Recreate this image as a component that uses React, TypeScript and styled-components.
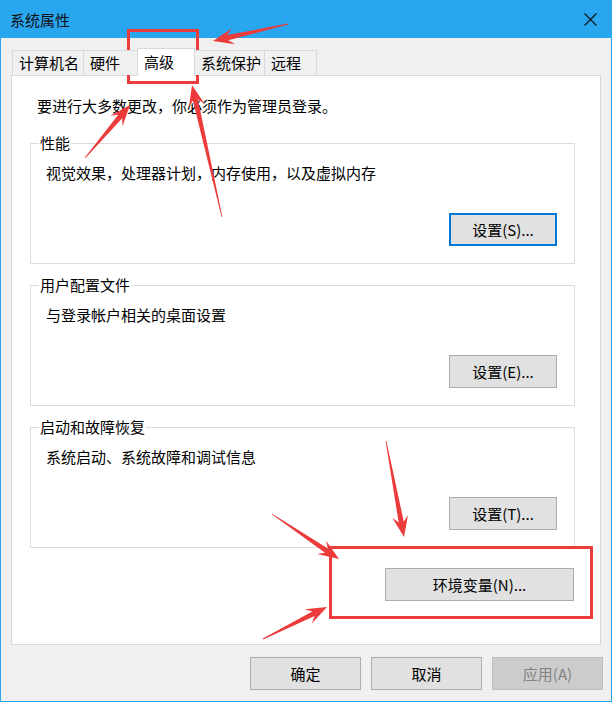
import React from 'react';
import styled, { createGlobalStyle } from 'styled-components';

const GlobalStyle = createGlobalStyle`
  html, body { margin: 0; padding: 0; background: #ffffff; }
  body {
    font-family: "Noto Sans CJK SC", "Noto Sans", sans-serif;
    font-size: 15px;
    color: #000;
  }
  * { box-sizing: border-box; }
`;

const Stage = styled.div`
  position: relative;
  width: 614px;
  height: 703px;
`;

const Window = styled.div`
  width: 612px;
  height: 702px;
  border: 1px solid #2ea4ea;
  background: #f0f0f0;
  display: flex;
  flex-direction: column;
`;

const TitleBar = styled.div`
  height: 37px;
  flex: none;
  background: #29a6f0;
  display: flex;
  align-items: center;
  justify-content: space-between;
  padding: 0 14px 0 9px;
`;

const Title = styled.span`
  font-size: 15px;
  line-height: 20px;
  color: #111;
`;

const CloseIcon = styled.svg`
  width: 13px;
  height: 13px;
  display: block;
`;

const Body = styled.div`
  flex: 1;
  display: flex;
  flex-direction: column;
  padding: 10px 8px 11px 10px;
`;

const TabStrip = styled.div`
  height: 27px;
  display: flex;
  align-items: flex-end;
  padding-left: 1px;
`;

const Tab = styled.div<{ $w: number; $active?: boolean }>`
  width: ${p => p.$w}px;
  height: ${p => (p.$active ? 28 : 25)}px;
  margin-bottom: ${p => (p.$active ? -1 : 0)}px;
  margin-left: -1px;
  &:first-child { margin-left: 0; }
  position: relative;
  z-index: ${p => (p.$active ? 2 : 1)};
  border: 1px solid #d9d9d9;
  border-bottom: none;
  background: ${p => (p.$active ? '#ffffff' : '#f0f0f0')};
  padding: ${p => (p.$active ? '0 0 2px 6px' : '0 0 0 6px')};
  display: flex;
  align-items: center;
  font-size: 15px;
  line-height: 20px;
  white-space: nowrap;
`;

const Panel = styled.div`
  width: 590px;
  height: 570px;
  flex: none;
  background: #ffffff;
  border: 1px solid #d9d9d9;
  padding: 20px 25px 0 18px;
  display: flex;
  flex-direction: column;
`;

const Intro = styled.div`
  margin-left: 7px;
  line-height: 20px;
  white-space: nowrap;
`;

const Groups = styled.div`
  margin-top: 17px;
  display: flex;
  flex-direction: column;
  gap: 11px;
`;

const Group = styled.fieldset`
  margin: 0;
  padding: 0;
  min-width: 0;
  border: 1px solid #dcdcdc;
`;

const Legend = styled.legend`
  margin-left: 8px;
  padding: 0 1px;
  font-size: 15px;
  line-height: 20px;
`;

const GroupBody = styled.div`
  padding: 10px 17px 17px 15px;
  display: flex;
  flex-direction: column;
`;

const Desc = styled.div`
  line-height: 20px;
  white-space: nowrap;
`;

const Button = styled.button<{ $w: number; $variant?: 'normal' | 'focus' | 'disabled' }>`
  width: ${p => p.$w}px;
  height: 33px;
  flex: none;
  font-family: inherit;
  font-size: 15px;
  line-height: 20px;
  padding: 0;
  margin: 0;
  display: flex;
  align-items: center;
  justify-content: center;
  cursor: default;
  background: ${p => (p.$variant === 'disabled' ? '#cccccc' : '#e1e1e1')};
  color: ${p => (p.$variant === 'disabled' ? '#838383' : '#000')};
  border: ${p =>
    p.$variant === 'focus'
      ? '2px solid #0078d7'
      : p.$variant === 'disabled'
      ? '1px solid #bfbfbf'
      : '1px solid #adadad'};
`;

const GroupButton = styled(Button)`
  margin-top: 30px;
  align-self: flex-end;
`;

const EnvRow = styled.div`
  margin-top: 20px;
  display: flex;
  justify-content: flex-end;
  padding-right: 1px;
`;

const Footer = styled.div`
  margin-top: 12px;
  display: flex;
  justify-content: flex-end;
  gap: 10px;
`;

const Overlay = styled.svg`
  position: absolute;
  left: 0;
  top: 0;
  width: 614px;
  height: 703px;
  pointer-events: none;
`;

const RED = '#ec3b3b';

function arrowPoints(tx: number, ty: number, px: number, py: number): string {
  const head = 21;
  const headHalf = 8;
  const neckHalf = 2.6;
  const dx = px - tx;
  const dy = py - ty;
  const len = Math.hypot(dx, dy);
  const ux = dx / len;
  const uy = dy / len;
  const nx = -uy;
  const ny = ux;
  const neckX = px - ux * head * 0.72;
  const neckY = py - uy * head * 0.72;
  const baseX = px - ux * head;
  const baseY = py - uy * head;
  const pts: [number, number][] = [
    [tx + nx * 0.4, ty + ny * 0.4],
    [neckX + nx * neckHalf, neckY + ny * neckHalf],
    [baseX + nx * headHalf, baseY + ny * headHalf],
    [px, py],
    [baseX - nx * headHalf, baseY - ny * headHalf],
    [neckX - nx * neckHalf, neckY - ny * neckHalf],
    [tx - nx * 0.4, ty - ny * 0.4],
  ];
  return pts.map(p => `${p[0].toFixed(1)},${p[1].toFixed(1)}`).join(' ');
}

const arrows: [number, number, number, number][] = [
  [288, 24, 213, 41],
  [85, 158, 130, 105],
  [222, 217, 192, 85],
  [386, 441, 404, 537],
  [272, 514, 339, 559],
  [263, 639, 327, 607],
];

const tabs = [
  { label: '计算机名', w: 72 },
  { label: '硬件', w: 55 },
  { label: '高级', w: 58, active: true },
  { label: '系统保护', w: 71 },
  { label: '远程', w: 53 },
];

const groups = [
  { title: '性能', desc: '视觉效果，处理器计划，内存使用，以及虚拟内存', btn: '设置(S)...', focus: true },
  { title: '用户配置文件', desc: '与登录帐户相关的桌面设置', btn: '设置(E)...' },
  { title: '启动和故障恢复', desc: '系统启动、系统故障和调试信息', btn: '设置(T)...' },
];

export default function App() {
  return (
    <Stage>
      <GlobalStyle />
      <Window>
        <TitleBar>
          <Title>系统属性</Title>
          <CloseIcon viewBox="0 0 13 13">
            <path d="M0.5 0.5 L12.5 12.5 M12.5 0.5 L0.5 12.5" stroke="#111" strokeWidth="1.1" fill="none" />
          </CloseIcon>
        </TitleBar>
        <Body>
          <TabStrip>
            {tabs.map(t => (
              <Tab key={t.label} $w={t.w} $active={t.active}>
                {t.label}
              </Tab>
            ))}
          </TabStrip>
          <Panel>
            <Intro>要进行大多数更改，你必须作为管理员登录。</Intro>
            <Groups>
              {groups.map(g => (
                <Group key={g.title}>
                  <Legend>{g.title}</Legend>
                  <GroupBody>
                    <Desc>{g.desc}</Desc>
                    <GroupButton $w={108} $variant={g.focus ? 'focus' : 'normal'}>
                      {g.btn}
                    </GroupButton>
                  </GroupBody>
                </Group>
              ))}
            </Groups>
            <EnvRow>
              <Button $w={189}>环境变量(N)...</Button>
            </EnvRow>
          </Panel>
          <Footer>
            <Button $w={111}>确定</Button>
            <Button $w={111}>取消</Button>
            <Button $w={111} $variant="disabled">应用(A)</Button>
          </Footer>
        </Body>
      </Window>
      <Overlay viewBox="0 0 614 703">
        <rect x={128.5} y={30.5} width={69} height={52} fill="none" stroke={RED} strokeWidth={3} />
        <rect x={330.5} y={547.5} width={261} height={70} fill="none" stroke={RED} strokeWidth={3} />
        {arrows.map((a, i) => (
          <polygon key={i} points={arrowPoints(a[0], a[1], a[2], a[3])} fill={RED} />
        ))}
      </Overlay>
    </Stage>
  );
}
